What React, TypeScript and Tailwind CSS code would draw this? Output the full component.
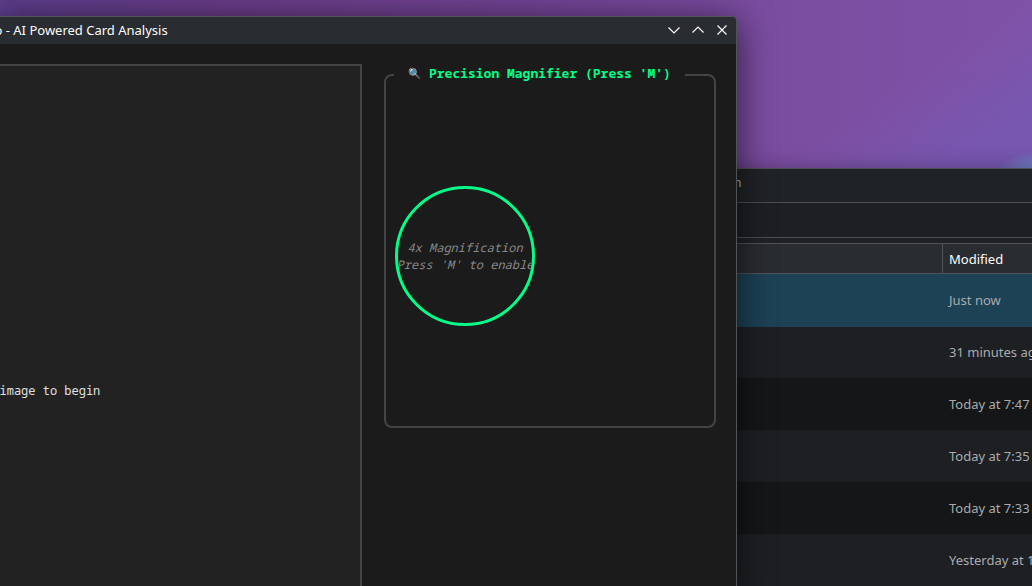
import React from "react";

const files = [
  { modified: "Just now", row: "h-[53px] bg-[#1d4155]" },
  { modified: "31 minutes ago", row: "h-[51px] bg-[#1e1f23]" },
  { modified: "Today at 7:47 AM", row: "h-[52px] bg-[#151618] pt-px" },
  { modified: "Today at 7:35 AM", row: "h-[52px] bg-[#1e1f23] pt-px" },
  { modified: "Today at 7:33 AM", row: "h-[52px] bg-[#151618] pt-px" },
  { modified: "Yesterday at 10:12 PM", row: "h-[52px] bg-[#1e1f23] pt-px" },
];

function FileManager() {
  return (
    <div className="absolute left-[480px] top-[168px] flex h-[420px] w-[700px] flex-col overflow-hidden border-t border-[#4b5052] bg-[#202326] text-[13px] shadow-[0_4px_22px_rgba(0,0,0,0.4)]">
      <div className="flex h-[33px] shrink-0 pl-[147px] pt-[3px] text-[#b0b2b3]">
        <span className="w-[114.5px] text-right leading-[20px]">Selection</span>
      </div>
      <div className="h-[36px] shrink-0 border-y border-[#4b4d51] bg-[#1e1f23]" />
      <div className="h-[5px] shrink-0 bg-[#1f2125]" />
      <div className="flex h-[31px] shrink-0 border-y border-[#505457] bg-[#292c30] text-[#fcfcfc]">
        <div className="w-[463px] shrink-0 border-r border-[#505457]" />
        <div className="pl-[6px] pt-px leading-[29px]">Modified</div>
      </div>
      {files.map((f) => (
        <div key={f.modified} className={`flex shrink-0 items-center whitespace-nowrap pl-[469px] text-[#a9abad] ${f.row}`}>
          {f.modified}
        </div>
      ))}
    </div>
  );
}

function WindowControls() {
  return (
    <div className="flex items-start gap-[10px] pt-[6px] text-[#fcfcfc]">
      <svg width="14" height="14" viewBox="0 0 14 14" fill="none" stroke="currentColor" strokeWidth="1.2">
        <path d="M1.5 4.5 7 10l5.5-5.5" />
      </svg>
      <svg width="14" height="14" viewBox="0 0 14 14" fill="none" stroke="currentColor" strokeWidth="1.2">
        <path d="M1.5 9.5 7 4l5.5 5.5" />
      </svg>
      <svg width="14" height="14" viewBox="0 0 14 14" fill="none" stroke="currentColor" strokeWidth="1.2">
        <path d="m2.5 2.5 9 9M11.5 2.5l-9 9" />
      </svg>
    </div>
  );
}

const mono = "font-['Noto_Sans_Mono','DejaVu_Sans_Mono',monospace]";

function CardWindow() {
  return (
    <div className="absolute left-[-4px] top-[16px] flex h-[580px] w-[741px] flex-col overflow-hidden rounded-t-[5px] border border-[#505457] bg-[#1b1b1b] shadow-[0_6px_36px_rgba(0,0,0,0.65)]">
      <div className="flex h-[27px] shrink-0 justify-between bg-[#292c30] pr-[7px] text-[13px] text-[#fcfcfc]">
        <span className="-ml-[2.5px] whitespace-nowrap leading-[27px]">o - AI Powered Card Analysis</span>
        <WindowControls />
      </div>
      <div className="flex grow gap-[22px] pt-[20px]">
        <div className="w-[365px] shrink-0 border-r-2 border-t-2 border-[#444444] bg-[#222222]">
          <p className={`pl-[2.5px] pt-[316px] text-[12px] leading-[17px] text-[#e0e0e0] ${mono}`}>image to begin</p>
        </div>
        <section className="mt-[10px] h-[354px] w-[332px] rounded-[8px] border-2 border-[#444444] pl-[8px]">
          <h2 className={`-mt-[13px] flex h-[20px] w-[291px] items-center whitespace-pre bg-[#1b1b1b] pl-[14px] text-[13px] font-bold text-[#00ff88] ${mono}`}>
            <span className="w-[21px] shrink-0 text-[10.5px] font-normal leading-[20px]">🔍</span>
            <span className="leading-[20px]">Precision Magnifier (Press 'M')</span>
          </h2>
          <div className={`ml-px mt-[103px] flex size-[140px] flex-col items-center justify-center overflow-hidden rounded-full border-3 border-[#00ff88] text-[12px] italic leading-[17px] text-[#888888] ${mono}`}>
            <span className="whitespace-nowrap">4x Magnification</span>
            <span className="whitespace-nowrap">Press 'M' to enable</span>
          </div>
        </section>
      </div>
    </div>
  );
}

export default function App() {
  return (
    <main className="relative h-[586px] w-[1032px] overflow-hidden bg-[radial-gradient(ellipse_58px_36px_at_1046px_186px,#6d8ac8_0%,#6d7cc0_60%,transparent_100%),linear-gradient(146deg,transparent_74%,#7757b0_87%),linear-gradient(90deg,#5c3d8c_0%,#6b3c88_24%,#75469a_60%,#7c4ea2_78%,#8052a7_100%)] bg-[length:100%_100%,1032px_240px,100%_100%] font-['Noto_Sans',sans-serif]">
      <FileManager />
      <CardWindow />
    </main>
  );
}
